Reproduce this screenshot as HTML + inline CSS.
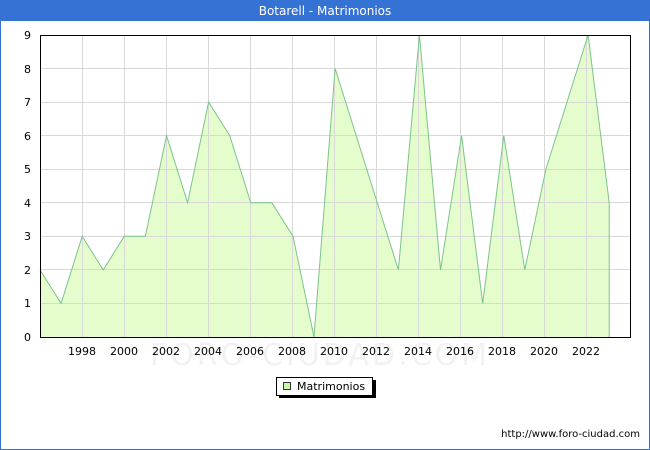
<!DOCTYPE html>
<html><head><meta charset="utf-8"><style>
html,body{margin:0;padding:0;background:#fff}
svg{display:block}
text{font-family:"DejaVu Sans","Liberation Sans",sans-serif;font-size:11px;fill:#000}
</style></head><body>
<svg width="650" height="450" viewBox="0 0 650 450" xmlns="http://www.w3.org/2000/svg">
<rect x="0.5" y="0.5" width="649" height="449" fill="#fff" stroke="#3472d4"/>
<rect x="0" y="0" width="650" height="21" fill="#3472d4"/>
<text x="325" y="15" text-anchor="middle" style="fill:#fff;font-size:12px">Botarell - Matrimonios</text>
<polygon fill="#e5fdcc" stroke="none" points="40,337 40,269.9 61.1,303.4 82.2,236.3 103.2,269.9 124.3,236.3 145.4,236.3 166.5,135.6 187.6,202.8 208.6,102.1 229.7,135.6 250.8,202.8 271.9,202.8 293,236.3 314,337 335.1,68.5 356.2,135.6 377.3,202.8 398.4,269.9 419.4,35 440.5,269.9 461.6,135.6 482.7,303.4 503.8,135.6 524.8,269.9 545.9,169.2 567,102.1 588.1,35 609.2,202.8 609.2,337"/>
<text x="320" y="365" text-anchor="middle" style="font-size:30px;fill:#f2f2f2;letter-spacing:3px">FORO-CIUDAD.COM</text>
<g stroke="#d8d8d8" stroke-width="1">
<line x1="40" y1="303.5" x2="630" y2="303.5"/><line x1="40" y1="269.5" x2="630" y2="269.5"/>
<line x1="40" y1="236.5" x2="630" y2="236.5"/><line x1="40" y1="202.5" x2="630" y2="202.5"/>
<line x1="40" y1="169.5" x2="630" y2="169.5"/><line x1="40" y1="135.5" x2="630" y2="135.5"/>
<line x1="40" y1="102.5" x2="630" y2="102.5"/><line x1="40" y1="68.5" x2="630" y2="68.5"/>
<line x1="82.5" y1="35" x2="82.5" y2="337"/><line x1="124.5" y1="35" x2="124.5" y2="337"/>
<line x1="166.5" y1="35" x2="166.5" y2="337"/><line x1="208.5" y1="35" x2="208.5" y2="337"/>
<line x1="250.5" y1="35" x2="250.5" y2="337"/><line x1="292.5" y1="35" x2="292.5" y2="337"/>
<line x1="334.5" y1="35" x2="334.5" y2="337"/><line x1="376.5" y1="35" x2="376.5" y2="337"/>
<line x1="418.5" y1="35" x2="418.5" y2="337"/><line x1="460.5" y1="35" x2="460.5" y2="337"/>
<line x1="502.5" y1="35" x2="502.5" y2="337"/><line x1="544.5" y1="35" x2="544.5" y2="337"/>
<line x1="586.5" y1="35" x2="586.5" y2="337"/>
</g>
<polyline fill="none" stroke="#7cc48a" stroke-width="1" points="40,269.9 61.1,303.4 82.2,236.3 103.2,269.9 124.3,236.3 145.4,236.3 166.5,135.6 187.6,202.8 208.6,102.1 229.7,135.6 250.8,202.8 271.9,202.8 293,236.3 314,337 335.1,68.5 356.2,135.6 377.3,202.8 398.4,269.9 419.4,35 440.5,269.9 461.6,135.6 482.7,303.4 503.8,135.6 524.8,269.9 545.9,169.2 567,102.1 588.1,35 609.2,202.8 609.2,337"/>
<rect x="40.5" y="35.5" width="590" height="302" fill="none" stroke="#000"/>
<g text-anchor="end">
<text x="31" y="341">0</text><text x="31" y="307">1</text><text x="31" y="274">2</text>
<text x="31" y="240">3</text><text x="31" y="207">4</text><text x="31" y="173">5</text>
<text x="31" y="140">6</text><text x="31" y="106">7</text><text x="31" y="73">8</text>
<text x="31" y="39">9</text>
</g>
<g text-anchor="middle">
<text x="82" y="355">1998</text><text x="124" y="355">2000</text><text x="166" y="355">2002</text>
<text x="208" y="355">2004</text><text x="250" y="355">2006</text><text x="292" y="355">2008</text>
<text x="334" y="355">2010</text><text x="376" y="355">2012</text><text x="418" y="355">2014</text>
<text x="460" y="355">2016</text><text x="502" y="355">2018</text><text x="544" y="355">2020</text>
<text x="586" y="355">2022</text>
</g>
<rect x="279" y="380" width="97" height="18" fill="#000"/>
<rect x="276.5" y="377.5" width="96" height="18" fill="#fff" stroke="#000"/>
<rect x="283.5" y="382.5" width="7" height="7" fill="#ccf5a8" stroke="#333"/>
<text x="297" y="390">Matrimonios</text>
<text x="640" y="437" text-anchor="end" style="font-size:10px">http://www.foro-ciudad.com</text>
</svg>
</body></html>
